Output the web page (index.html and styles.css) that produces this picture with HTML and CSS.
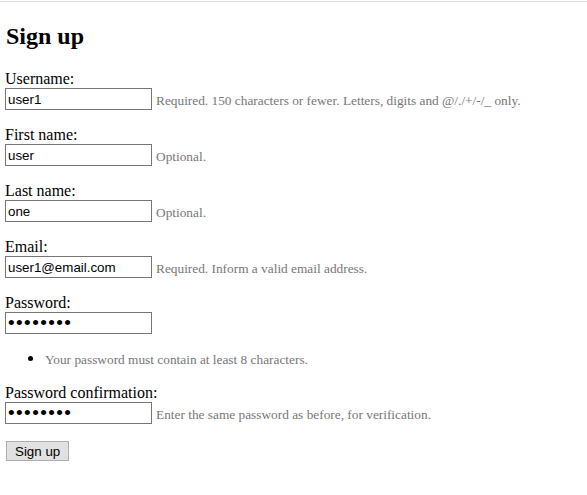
FILE: index.html
```html
<!DOCTYPE html>
<html>
<head>
<meta charset="utf-8">
<title>Sign up</title>
<link rel="stylesheet" href="styles.css">
</head>
<body>
<div class="topline"></div>
<main class="page">
  <h2 class="title">Sign up</h2>
  <form class="form">
    <p class="field"><label for="u">Username:</label><br><input id="u" class="text" type="text" value="user1"> <span class="helptext">Required. 150 characters or fewer. Letters, digits and @/./+/-/_ only.</span></p>
    <p class="field"><label for="f">First name:</label><br><input id="f" class="text" type="text" value="user"> <span class="helptext">Optional.</span></p>
    <p class="field"><label for="l">Last name:</label><br><input id="l" class="text" type="text" value="one"> <span class="helptext">Optional.</span></p>
    <p class="field"><label for="e">Email:</label><br><input id="e" class="text" type="text" value="user1@email.com"> <span class="helptext">Required. Inform a valid email address.</span></p>
    <p class="field"><label for="p1">Password:</label><br><input id="p1" class="text secret" type="password" value="password"></p>
    <ul class="helplist"><li>Your password must contain at least 8 characters.</li></ul>
    <p class="field"><label for="p2">Password confirmation:</label><br><input id="p2" class="text secret" type="password" value="password"> <span class="helptext">Enter the same password as before, for verification.</span></p>
    <button class="submit" type="button">Sign up</button>
  </form>
</main>
</body>
</html>
```
FILE: styles.css
```css
html, body {
  margin: 0;
  padding: 0;
  background: #fff;
}
body {
  font-family: "Liberation Serif", "Times New Roman", serif;
  font-size: 16px;
  color: #000;
}
.topline {
  height: 1px;
  margin-top: 1px;
  background: #e3e3e3;
}
.page {
  padding: 0 5px;
}
.title {
  font-size: 24px;
  font-weight: bold;
  margin: 20px 0 20px 1px;
  line-height: 28px;
}
.field {
  margin: 0 0 16px;
  line-height: 18px;
}
.text {
  box-sizing: border-box;
  width: 147px;
  height: 22px;
  margin: 0;
  padding: 1px 2px;
  border: 1px solid #767676;
  font-family: "Liberation Sans", Arial, sans-serif;
  font-size: 13.33px;
  color: #000;
  vertical-align: bottom;
  background: #fff;
}
.secret {
  font-size: 19px;
  letter-spacing: 1.4px;
  padding: 0 2px;
  line-height: 20px;
}
.helptext {
  color: #777;
  font-size: 13.33px;
}
.helplist {
  margin: 17px 0 17px;
  padding: 0 0 0 40px;
  color: #777;
  font-size: 13.33px;
  line-height: 15px;
}
.helplist li::marker {
  color: #000;
  font-size: 17px;
}
.submit {
  display: block;
  box-sizing: border-box;
  margin: 17px 0 0 1px;
  height: 20px;
  padding: 0 8px;
  background: #e1e1e1;
  border: 1px solid #adadad;
  border-radius: 0;
  font-family: "Liberation Sans", Arial, sans-serif;
  font-size: 13.33px;
  color: #000;
}
```
